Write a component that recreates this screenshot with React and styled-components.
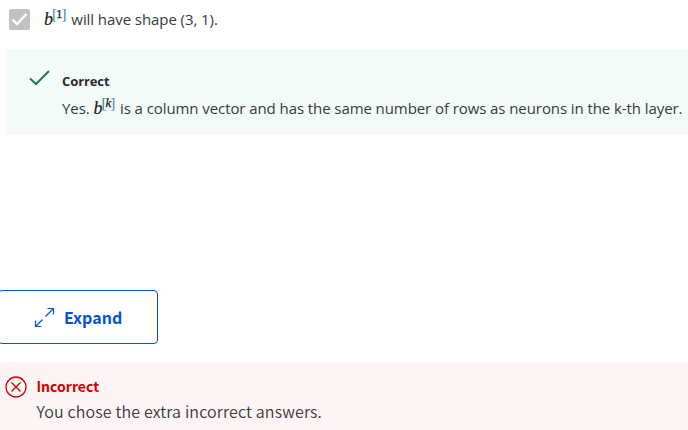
import React from 'react';
import styled, { createGlobalStyle } from 'styled-components';

const Global = createGlobalStyle`
  body { margin: 0; background: #fff; overflow: hidden; font-family: "Open Sans", "Noto Sans", sans-serif; color: #373a3c; }
  * { box-sizing: border-box; }
`;
const Page = styled.main`width: 688px; height: 430px; overflow: hidden; display: flex; flex-direction: column;`;
const Option = styled.div`display: flex; height: 49px; padding: 9px 0 0 9px;`;
const Checkbox = styled.span`width: 21px; height: 21px; border-radius: 2px; background: #c1c1c1; display: flex; align-items: center; justify-content: center;`;
const Text = styled.span`font-size: 15px; line-height: 22px; letter-spacing: -0.08px; white-space: pre; color: #373a3c;`;
const OptionText = styled(Text)`margin: -1px 0 0 14px; letter-spacing: -0.07px;`;
const CorrectText = styled(Text)`margin-top: 5px;`;
const ErrorText = styled(Text)`margin-top: 1px; font: 350 16px/26px "Noto Sans CJK SC", sans-serif; letter-spacing: 0.14px;`;
const Formula = styled.span`display: inline-flex; align-items: baseline; height: 18px; color: #222; letter-spacing: 0;`;
const Variable = styled.i`font: italic 18px/18px "Liberation Serif", serif; -webkit-text-stroke: 0.2px #222;`;
const Index = styled.span`font: 13px/14px "Liberation Serif", serif; position: relative; top: -6px; display: inline-flex; margin-right: 1px;`;
const Bracket = styled.span`color: #3785ab; font-size: 15px; margin: ${p => p.$close ? '0 0 0 -1px' : '0 -1px 0 -1px'};`;
const Digit = styled.span`font-style: ${p => p.$italic ? 'italic' : 'normal'}; -webkit-text-stroke: 0.25px #222;`;
const Correct = styled.section`margin-left: 6px; height: 86px; background: #f4faf8; display: flex; padding: 21px 0 0 23px;`;
const Copy = styled.div`display: flex; flex-direction: column;`;
const CorrectCopy = styled(Copy)`margin-left: 12px;`;
const Title = styled.strong`font-size: 13px; line-height: 22px; letter-spacing: -0.1px; color: #292b2d;`;
const ErrorTitle = styled.strong`font: 700 14px/22px "Noto Sans CJK SC", sans-serif; color: #d30001;`;
const Expand = styled.button`margin: 155px 0 0 -2px; width: 160px; height: 54px; flex: none; border: 1px solid #0056d2; border-radius: 4px; background: #fff; color: #0056d2; display: flex; align-items: center; gap: 9px; padding: 0 0 0 35px; font: 700 16px "Noto Sans CJK SC", sans-serif;`;
const ExpandIcon = styled.svg`margin-top: 1px;`;
const Incorrect = styled.section`margin-top: 18px; flex: 1; background: #fdf4f5; display: flex; padding: 14px 0 0 5px;`;
const ErrorCopy = styled(Copy)`margin: -1px 0 0 9.5px;`;

export default function App() {
  return <><Global /><Page>
    <Option><Checkbox><svg width="21" height="21" fill="none" stroke="#fff" strokeWidth="2.4"><path d="M3.5 10.5l4.5 4.5L17.5 5" /></svg></Checkbox>
      <OptionText><Formula><Variable>b</Variable><Index><Bracket>[</Bracket><Digit>1</Digit><Bracket $close>]</Bracket></Index></Formula> will have shape (3, 1).</OptionText></Option>
    <Correct><svg width="21" height="18" fill="none" stroke="#1d7c50" strokeWidth="2"><path d="M1 8.5l6 5.5L20 1" /></svg>
      <CorrectCopy><Title>Correct</Title><CorrectText>Yes. <Formula><Variable>b</Variable><Index><Bracket>[</Bracket><Digit $italic>k</Digit><Bracket $close>]</Bracket></Index></Formula> is a column vector and has the same number of rows as neurons in the k-th layer.</CorrectText></CorrectCopy></Correct>
    <Expand><ExpandIcon width="21" height="22" fill="none" stroke="#0056d2" strokeWidth="1.2"><path d="M11.5 9.5L19.5 1.5M13.5 1.5h6v6M8.5 12.5L1.5 19.5M1.5 13.5v6h6" /></ExpandIcon>Expand</Expand>
    <Incorrect><svg width="22" height="22" fill="none" stroke="#d30001" strokeWidth="1.3"><circle cx="11" cy="11" r="10" /><path d="M6.5 6.5l9 9m0-9l-9 9" /></svg>
      <ErrorCopy><ErrorTitle>Incorrect</ErrorTitle><ErrorText>You chose the extra incorrect answers.</ErrorText></ErrorCopy></Incorrect>
  </Page></>;
}
